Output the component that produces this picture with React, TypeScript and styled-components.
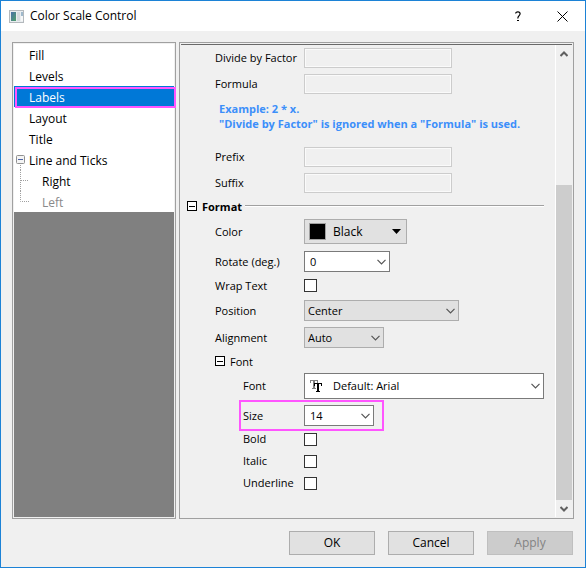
import React, { useState } from "react";
import styled, { createGlobalStyle, css } from "styled-components";

const GlobalStyle = createGlobalStyle`
  * {
    box-sizing: border-box;
  }

  body {
    margin: 0;
    background-color: #f0f0f0;
  }

  body,
  button,
  input,
  select {
    font-family: "Open Sans", "Noto Sans", sans-serif;
    font-size: 12px;
    line-height: 16px;
    color: #000;
  }
`;

const Window = styled.div`
  display: flex;
  flex-direction: column;
  min-height: 100vh;
  border: 1px solid #1c82d6;
  background-color: #f0f0f0;
`;

const TitleBar = styled.header`
  display: flex;
  align-items: center;
  height: 30px;
  padding-left: 8px;
  background-color: #fff;
`;

const Title = styled.h1`
  flex: 1;
  margin: 0 0 0 6px;
  font-size: 12px;
  font-weight: 400;
`;

const TitleButton = styled.button`
  display: flex;
  align-items: center;
  justify-content: center;
  width: 45px;
  height: 30px;
  padding: 0;
  border: none;
  background: transparent;
`;

const Body = styled.main`
  display: grid;
  grid-template-columns: 164px minmax(0, 1fr);
  gap: 3px;
  flex: 1;
  padding: 11px 11px 0;
`;

const Sidebar = styled.nav`
  padding: 1px;
  border: 1px solid #a0a0a0;
  background-color: #808080;
  box-shadow: inset 0 0 0 1px #f0f0f0;
`;

const TreeList = styled.div`
  display: flex;
  flex-direction: column;
  background-color: #fff;
`;

const TreeItem = styled.button<{ $nested?: boolean; $active?: boolean }>`
  position: relative;
  height: 21px;
  padding: 2px 0 0 ${({ $nested }) => ($nested ? "28px" : "15px")};
  border: none;
  background-color: ${({ $active }) => ($active ? "#0078d7" : "transparent")};
  color: ${({ $active }) => ($active ? "#fff" : "#000")};
  text-align: left;

  &:disabled {
    color: #8a8a8a;
  }

  ${({ $active }) =>
    $active &&
    css`
      &::after {
        content: "";
        position: absolute;
        inset: 1px -2px -1px 1px;
        border: 2px solid #ff55ff;
      }
    `}
`;

const TreeMark = styled.svg`
  position: absolute;
  top: 0;
  left: 0;
`;

const Panel = styled.section`
  display: flex;
  padding: 1px;
  border: 1px solid #a0a0a0;
`;

const PanelInner = styled.div`
  display: flex;
  flex: 1;
  min-width: 0;
  border-top: 1px solid #696969;
`;

const Form = styled.form`
  flex: 1;
  min-width: 0;
  padding: 0 11px 0 6px;
`;

const Group = styled.div`
  padding-left: 28px;
`;

const Row = styled.div<{ $height: number }>`
  display: flex;
  align-items: center;
  height: ${({ $height }) => $height}px;
`;

const HighlightRow = styled(Row)`
  position: relative;
  width: fit-content;
  margin-top: 4px;

  &::after {
    content: "";
    position: absolute;
    inset: -3px -10px -3px -4px;
    border: 2px solid #ff55ff;
    pointer-events: none;
  }
`;

const Label = styled.label<{ $nested?: boolean }>`
  flex: none;
  width: ${({ $nested }) => ($nested ? "61px" : "89px")};
  font-size: 11px;
  white-space: nowrap;
`;

const TextInput = styled.input`
  width: 148px;
  height: 20px;
  padding: 0 4px;
  border: 1px solid #ccc;
  background-color: #f0f0f0;
  font-size: 11px;
  box-shadow: inset 0 0 0 1px #fafafa;
`;

const Hint = styled.p`
  margin: 4px 0 13px 4px;
  color: #3c8ffa;
  font-size: 11px;
  font-weight: 700;
  line-height: 15px;
  white-space: nowrap;
`;

const GroupHeader = styled.div<{ $height: number }>`
  display: flex;
  align-items: center;
  gap: 5px;
  height: ${({ $height }) => $height}px;
`;

const GroupTitle = styled.h2<{ $bold?: boolean }>`
  margin: 0;
  padding-top: 1px;
  font-size: 11px;
  font-weight: ${({ $bold }) => ($bold ? 700 : 400)};
`;

const GroupLine = styled.div`
  flex: 1;
  height: 2px;
  margin-left: -2px;
  border-top: 1px solid #a0a0a0;
  border-bottom: 1px solid #fff;
`;

const ToggleButton = styled.button`
  display: flex;
  padding: 0;
  border: none;
  background: transparent;
`;

const SelectBox = styled.div<{ $width?: number; $height?: number }>`
  position: relative;
  ${({ $width }) => ($width ? `width: ${$width}px;` : "flex: 1;")}
  height: ${({ $height = 21 }) => $height}px;
`;

const Select = styled.select<{
  $editable?: boolean;
  $icon?: boolean;
  $large?: boolean;
}>`
  appearance: none;
  display: block;
  width: 100%;
  height: 100%;
  padding: 0 20px 0
    ${({ $icon, $editable }) => ($icon ? "28px" : $editable ? "5px" : "3px")};
  border: 1px solid ${({ $editable }) => ($editable ? "#7a7a7a" : "#adadad")};
  border-radius: 0;
  background-color: ${({ $editable }) => ($editable ? "#fff" : "#e1e1e1")};
  font-size: ${({ $large }) => ($large ? "12px" : "11px")};
`;

const SelectArrow = styled.span<{ $right: number }>`
  position: absolute;
  top: 0;
  right: ${({ $right }) => $right}px;
  display: flex;
  align-items: center;
  height: 100%;
  pointer-events: none;
`;

const SelectIcon = styled.span`
  position: absolute;
  top: 0;
  left: 5px;
  display: flex;
  align-items: center;
  height: 100%;
  pointer-events: none;
`;

const Swatch = styled.span`
  width: 17px;
  height: 17px;
  border: 1px solid #a0a0a0;
  background-color: #000;
`;

const Checkbox = styled.input`
  appearance: none;
  width: 13px;
  height: 13px;
  margin: 0;
  border: 1px solid #333;
  background-color: #fff;

  &:checked {
    box-shadow: inset 0 0 0 2px #fff;
    background-color: #333;
  }
`;

const ScrollBar = styled.div`
  display: flex;
  flex-direction: column;
  flex: none;
  width: 17px;
  border-left: 1px solid #fff;
`;

const ScrollArrow = styled.button`
  display: flex;
  align-items: center;
  justify-content: center;
  height: 17px;
  padding: 0;
  border: none;
  background: transparent;
`;

const ScrollTrack = styled.div`
  display: flex;
  flex: 1;
  flex-direction: column;
  justify-content: flex-end;
`;

const ScrollThumb = styled.div`
  height: 72%;
  background-color: #cdcdcd;
`;

const Footer = styled.footer`
  display: flex;
  justify-content: flex-end;
  gap: 13px;
  padding: 12px;
`;

const ActionButton = styled.button`
  width: 86px;
  height: 24px;
  padding: 0;
  border: 1px solid #adadad;
  background-color: #e1e1e1;

  &:disabled {
    border-color: #bfbfbf;
    background-color: #ccc;
    color: #838383;
  }
`;

const AppIcon = () => (
  <svg width="15" height="13" viewBox="0 0 15 13" aria-hidden="true">
    <defs>
      <linearGradient id="scale" x1="0" y1="0" x2="1" y2="1">
        <stop offset="0" stopColor="#4a6fa8" />
        <stop offset="1" stopColor="#4fa06a" />
      </linearGradient>
    </defs>
    <rect x="0.5" y="0.5" width="14" height="12" fill="#e9edf0" stroke="#b4b9bd" />
    <rect x="2" y="2" width="5" height="9" fill="url(#scale)" />
    <rect x="8" y="2" width="3" height="9" fill="#d5dade" />
    <rect x="12" y="2" width="2" height="4" fill="#9fb9cc" />
    <rect x="12" y="6" width="2" height="5" fill="#f7f8f8" />
  </svg>
);

const Chevron = () => (
  <svg width="9" height="6" viewBox="0 0 9 6" aria-hidden="true">
    <path d="M0.5 0.8L4.5 4.8L8.5 0.8" fill="none" stroke="#555" strokeWidth="1.2" />
  </svg>
);

const Triangle = () => (
  <svg width="9" height="5" viewBox="0 0 9 5" aria-hidden="true">
    <path d="M0 0H9L4.5 5Z" fill="#000" />
  </svg>
);

const FontIcon = () => (
  <svg width="14" height="14" viewBox="0 0 14 14" shapeRendering="crispEdges" aria-hidden="true">
    <path d="M1 1H9V4H8V2H6V9H7V10H3V9H4V2H2V4H1Z" fill="#808080" />
    <path d="M5 4H13V7H12V5H10V12H11V13H7V12H8V5H6V7H5Z" fill="#000" />
  </svg>
);

const Minus = () => (
  <svg width="10" height="10" viewBox="0 0 10 10" aria-hidden="true">
    <rect x="0.5" y="0.5" width="9" height="9" fill="#fff" stroke="#000" />
    <path d="M2 5.5H8" stroke="#000" />
  </svg>
);

const ScrollChevron = ({ down }: { down?: boolean }) => (
  <svg width="8" height="6" viewBox="0 0 8 6" aria-hidden="true">
    <path
      d={down ? "M0.5 1L4 4.5L7.5 1" : "M0.5 5L4 1.5L7.5 5"}
      fill="none"
      stroke="#606060"
      strokeWidth="2"
    />
  </svg>
);

const treeItems = [
  { name: "Fill" },
  { name: "Levels" },
  { name: "Labels" },
  { name: "Layout" },
  { name: "Title" },
  { name: "Line and Ticks", expandable: true },
  { name: "Right", nested: true },
  { name: "Left", nested: true, disabled: true },
];

type ComboProps = {
  id: string;
  options: string[];
  width?: number;
  height?: number;
  editable?: boolean;
  large?: boolean;
  icon?: React.ReactNode;
  arrow?: React.ReactNode;
};

function Combo({ id, options, width, height, editable, large, icon, arrow }: ComboProps) {
  return (
    <SelectBox $width={width} $height={height}>
      <Select id={id} $editable={editable} $icon={!!icon} $large={large}>
        {options.map((option) => (
          <option key={option}>{option}</option>
        ))}
      </Select>
      {icon && <SelectIcon>{icon}</SelectIcon>}
      <SelectArrow $right={arrow ? 6 : 4}>{arrow || <Chevron />}</SelectArrow>
    </SelectBox>
  );
}

function CheckRow({ id, label }: { id: string; label: string }) {
  return (
    <Row $height={22}>
      <Label htmlFor={id} $nested>
        {label}
      </Label>
      <Checkbox type="checkbox" id={id} />
    </Row>
  );
}

function InputRow({ id, label }: { id: string; label: string }) {
  return (
    <Row $height={26}>
      <Label htmlFor={id}>{label}</Label>
      <TextInput id={id} type="text" disabled />
    </Row>
  );
}

export default function App() {
  const [selected, setSelected] = useState("Labels");
  const [formatOpen, setFormatOpen] = useState(true);
  const [fontOpen, setFontOpen] = useState(true);

  return (
    <>
      <GlobalStyle />
      <Window>
        <TitleBar>
          <AppIcon />
          <Title>Color Scale Control</Title>
          <TitleButton type="button" aria-label="Help">
            <svg width="6" height="11" viewBox="0 0 6 11" aria-hidden="true">
              <path
                d="M0.7 2.5C0.7 0.2 5.1 0.2 5.1 2.8C5.1 4.6 2.8 4.8 2.8 7.5"
                fill="none"
                stroke="#000"
                strokeWidth="1.2"
              />
              <rect x="2" y="9" width="2" height="1" fill="#000" />
            </svg>
          </TitleButton>
          <TitleButton type="button" aria-label="Close">
            <svg width="11" height="11" viewBox="0 0 11 11" aria-hidden="true">
              <path d="M0.5 0.5L10.5 10.5M10.5 0.5L0.5 10.5" stroke="#000" />
            </svg>
          </TitleButton>
        </TitleBar>

        <Body>
          <Sidebar>
            <TreeList>
              {treeItems.map((item) => (
                <TreeItem
                  key={item.name}
                  type="button"
                  $nested={item.nested}
                  $active={selected === item.name}
                  disabled={item.disabled}
                  onClick={() => setSelected(item.name)}
                >
                  {item.expandable && (
                    <TreeMark width="14" height="21" aria-hidden="true">
                      <rect x="2.5" y="6.5" width="8" height="8" rx="1" fill="#f4f4f4" stroke="#919191" />
                      <path d="M4 10.5H9" stroke="#4b63a7" />
                      <path d="M6.5 16V21" stroke="#a0a0a0" strokeDasharray="1 1" />
                    </TreeMark>
                  )}
                  {item.nested && (
                    <TreeMark width="16" height="21" aria-hidden="true">
                      <path
                        d={item.disabled ? "M6.5 0V10.5H15" : "M6.5 0V21M7 10.5H15"}
                        fill="none"
                        stroke="#a0a0a0"
                        strokeDasharray="1 1"
                      />
                    </TreeMark>
                  )}
                  {item.name}
                </TreeItem>
              ))}
            </TreeList>
          </Sidebar>

          <Panel>
            <PanelInner>
              <Form>
                <Group>
                  <InputRow id="divide" label="Divide by Factor" />
                  <InputRow id="formula" label="Formula" />
                  <Hint>
                    Example: 2 * x.
                    <br />
                    "Divide by Factor" is ignored when a "Formula" is used.
                  </Hint>
                  <InputRow id="prefix" label="Prefix" />
                  <InputRow id="suffix" label="Suffix" />
                </Group>

                <GroupHeader $height={20}>
                  <ToggleButton
                    type="button"
                    aria-label="Format"
                    aria-expanded={formatOpen}
                    onClick={() => setFormatOpen(!formatOpen)}
                  >
                    <Minus />
                  </ToggleButton>
                  <GroupTitle $bold>Format</GroupTitle>
                  <GroupLine />
                </GroupHeader>

                {formatOpen && (
                  <Group>
                    <Row $height={31}>
                      <Label htmlFor="color">Color</Label>
                      <Combo
                        id="color"
                        options={["Black", "White"]}
                        width={103}
                        height={25}
                        large
                        icon={<Swatch />}
                        arrow={<Triangle />}
                      />
                    </Row>
                    <Row $height={29}>
                      <Label htmlFor="rotate">Rotate (deg.)</Label>
                      <Combo id="rotate" options={["0", "45", "90"]} width={86} editable />
                    </Row>
                    <Row $height={19}>
                      <Label htmlFor="wrap">Wrap Text</Label>
                      <Checkbox type="checkbox" id="wrap" />
                    </Row>
                    <Row $height={31}>
                      <Label htmlFor="position">Position</Label>
                      <Combo id="position" options={["Center"]} width={155} />
                    </Row>
                    <Row $height={23}>
                      <Label htmlFor="alignment">Alignment</Label>
                      <Combo id="alignment" options={["Auto"]} width={80} />
                    </Row>

                    <GroupHeader $height={24}>
                      <ToggleButton
                        type="button"
                        aria-label="Font"
                        aria-expanded={fontOpen}
                        onClick={() => setFontOpen(!fontOpen)}
                      >
                        <Minus />
                      </ToggleButton>
                      <GroupTitle>Font</GroupTitle>
                    </GroupHeader>

                    {fontOpen && (
                      <Group>
                        <Row $height={26}>
                          <Label htmlFor="font" $nested>
                            Font
                          </Label>
                          <Combo
                            id="font"
                            options={["Default: Arial"]}
                            height={26}
                            editable
                            icon={<FontIcon />}
                          />
                        </Row>
                        <HighlightRow $height={25}>
                          <Label htmlFor="size" $nested>
                            Size
                          </Label>
                          <Combo id="size" options={["14", "16", "18"]} width={70} editable />
                        </HighlightRow>
                        <CheckRow id="bold" label="Bold" />
                        <CheckRow id="italic" label="Italic" />
                        <CheckRow id="underline" label="Underline" />
                      </Group>
                    )}
                  </Group>
                )}
              </Form>

              <ScrollBar>
                <ScrollArrow type="button" aria-label="Scroll up">
                  <ScrollChevron />
                </ScrollArrow>
                <ScrollTrack>
                  <ScrollThumb />
                </ScrollTrack>
                <ScrollArrow type="button" aria-label="Scroll down">
                  <ScrollChevron down />
                </ScrollArrow>
              </ScrollBar>
            </PanelInner>
          </Panel>
        </Body>

        <Footer>
          <ActionButton type="button">OK</ActionButton>
          <ActionButton type="button">Cancel</ActionButton>
          <ActionButton type="button" disabled>
            Apply
          </ActionButton>
        </Footer>
      </Window>
    </>
  );
}
